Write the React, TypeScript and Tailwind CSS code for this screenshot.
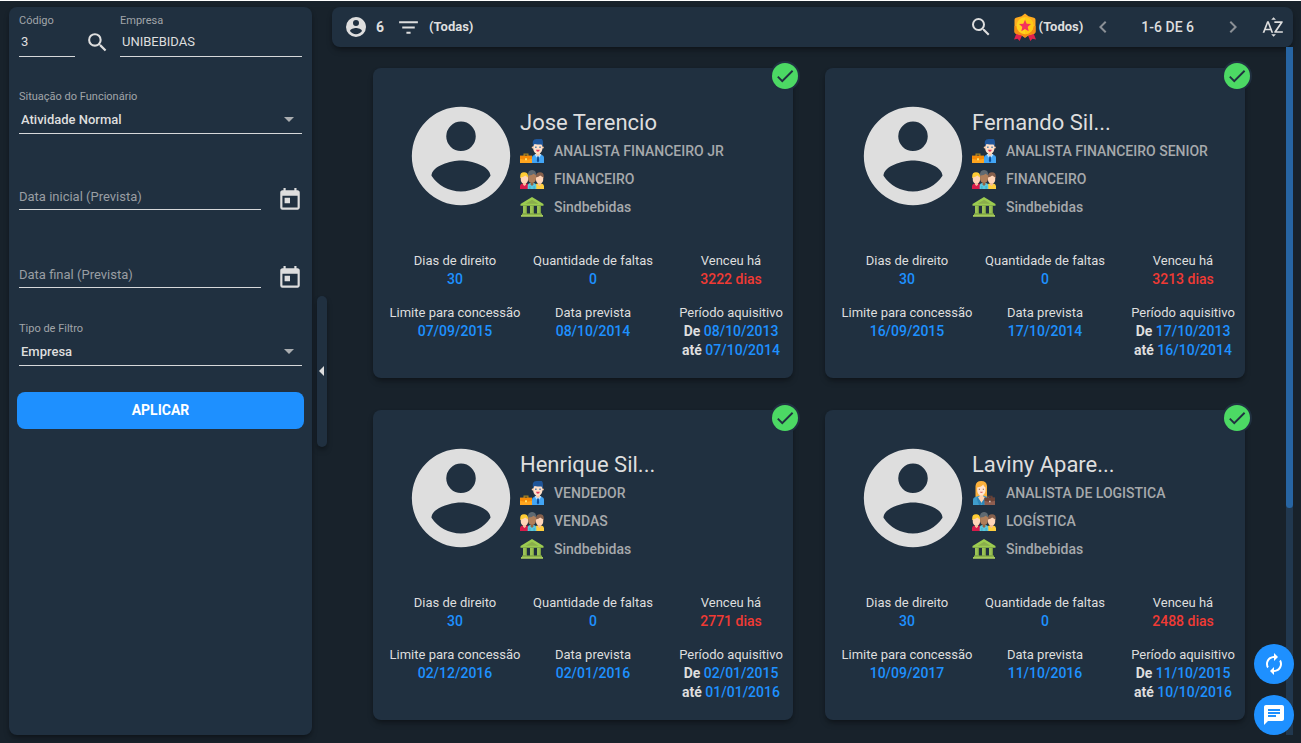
import { useState } from "react";
import {
  MdArrowDropDown,
  MdArrowLeft,
  MdAutorenew,
  MdChat,
  MdCheck,
  MdChevronLeft,
  MdChevronRight,
  MdFilterList,
  MdSearch,
  MdSortByAlpha,
  MdToday,
} from "react-icons/md";

interface Employee {
  name: string;
  role: string;
  female?: boolean;
  department: string;
  union: string;
  days: number;
  absences: number;
  overdue: number;
  limit: string;
  expected: string;
  from: string;
  to: string;
}

const employees: Employee[] = [
  {
    name: "Jose Terencio",
    role: "ANALISTA FINANCEIRO JR",
    department: "FINANCEIRO",
    union: "Sindbebidas",
    days: 30,
    absences: 0,
    overdue: 3222,
    limit: "07/09/2015",
    expected: "08/10/2014",
    from: "08/10/2013",
    to: "07/10/2014",
  },
  {
    name: "Fernando Sil...",
    role: "ANALISTA FINANCEIRO SENIOR",
    department: "FINANCEIRO",
    union: "Sindbebidas",
    days: 30,
    absences: 0,
    overdue: 3213,
    limit: "16/09/2015",
    expected: "17/10/2014",
    from: "17/10/2013",
    to: "16/10/2014",
  },
  {
    name: "Henrique Sil...",
    role: "VENDEDOR",
    department: "VENDAS",
    union: "Sindbebidas",
    days: 30,
    absences: 0,
    overdue: 2771,
    limit: "02/12/2016",
    expected: "02/01/2016",
    from: "02/01/2015",
    to: "01/01/2016",
  },
  {
    name: "Laviny Apare...",
    role: "ANALISTA DE LOGISTICA",
    female: true,
    department: "LOGÍSTICA",
    union: "Sindbebidas",
    days: 30,
    absences: 0,
    overdue: 2488,
    limit: "10/09/2017",
    expected: "11/10/2016",
    from: "11/10/2015",
    to: "10/10/2016",
  },
];

const AccountIcon = ({ size }: { size: number }) => (
  <svg viewBox="0 0 24 24" width={size} height={size} fill="currentColor" className="shrink-0">
    <path d="M12 19.200c-2.500 0-4.710-1.280-6-3.200.03-2 4-3.100 6-3.100s5.970 1.100 6 3.100c-1.290 1.920-3.500 3.200-6 3.200M12 5a3 3 0 013 3 3 3 0 01-3 3 3 3 0 01-3-3 3 3 0 013-3m0-3A10 10 0 002 12a10 10 0 0010 10 10 10 0 0010-10c0-5.530-4.500-10-10-10z" />
  </svg>
);

const BusinessManIcon = () => (
  <svg viewBox="0 0 24 24" className="size-6 shrink-0">
    <path d="M12 24v-5.500q0-2 2-2.600l2.600-.9h2.800l2.600.9q2 .6 2 2.600V24z" fill="#42a5f5" />
    <path d="M16 13.500h4v2.300L18 18l-2-2.200z" fill="#ffc9a3" />
    <path d="M14.600 15.400l1.200-.6L18 17.300l2.200-2.500 1.200.6-1.900 3-1.500-1-1.500 1z" fill="#bbdefb" />
    <path d="M17.300 17.400h1.400l.5 4.600-1.200 1.400-1.200-1.400z" fill="#0d4a94" />
    <circle cx="12.800" cy="8.500" r="1.100" fill="#ffc9a3" />
    <circle cx="22.800" cy="8.500" r="1" fill="#ffc9a3" />
    <path d="M13.200 4h9.200v6q-.7 4.500-4.600 4.800-3.900-.3-4.600-4.800z" fill="#ffe0c9" />
    <path d="M13.200 7.500Q11.200.200 16.500 0h5.200q2 1.500.9 7.500L21.500 5.500h-4L14.500 5z" fill="#1f5599" />
    <path d="M15.100 7.600h1.500v1.300h-1.500zm4.200 0h1.500v1.300h-1.500z" fill="#4f7fae" />
    <path d="M16 10.800h3.800q-.4 2-1.900 2t-1.900-2z" fill="#e5395a" />
    <path d="M3.500 17v-2.500h5V17h-1.200v-1.300H4.700V17z" fill="#a8841c" />
    <path d="M0 16.800h12V24H0z" fill="#ffa51f" />
    <path d="M0 16.800h12v3L6 21l-6-1.200z" fill="#f58a07" />
    <path d="M5 19.300h2v2H5z" fill="#ffe066" />
  </svg>
);

const BusinessWomanIcon = () => (
  <svg viewBox="0 0 24 24" className="size-6 shrink-0">
    <path d="M3.500 16V5Q4 0 9.200 0 14.500 0 15 5v11z" fill="#fbb03b" />
    <path d="M1 24v-5q0-2.500 3-3.200l4-1.300h3l4 1.300q3 .7 3 3.200v5z" fill="#3f9dcc" />
    <path d="M7.500 12h3.700v3.500l1.800 1L9.500 22 6 16.500l1.500-1z" fill="#ffcfad" />
    <path d="M5.500 16l4 6-1 2H7l-2.500-7zm8 0l-4 6 1 2H12l2.500-7z" fill="#2f86b8" />
    <path d="M5.200 6.500q4.500-.6 6-3 .6 2.200 2.300 3v3.500q-.6 4-4.200 4.500-3.600-.5-4.100-4.500z" fill="#ffe3cf" />
    <path d="M6.800 7.700h1.100v1.100H6.800zm4 0h1.100v1.100h-1.100z" fill="#8a5a44" />
    <path d="M7.900 10.800h3q-.3 1.300-1.500 1.300t-1.500-1.300z" fill="#e06a66" />
    <path d="M15 17v-2.300h5.500V17h-1.200v-1.200h-3.100V17z" fill="#6d4035" />
    <path d="M12.500 16.700H23V24H12.500z" fill="#8f5e50" />
    <path d="M12.500 16.700H23v3l-5.200 1.200-5.300-1.200z" fill="#6a4236" />
    <path d="M17 19.700h1.600v1.600H17z" fill="#d7ccc8" />
  </svg>
);

const TeamIcon = () => (
  <svg viewBox="0 0 24 24" className="size-6 shrink-0">
    <path d="M0 22v-3q.3-2.300 2.700-2.500H7L9 18v4z" fill="#d81b4a" />
    <path d="M24 22v-3q-.3-2.300-2.700-2.500H17L15 18v4z" fill="#ffcf3f" />
    <path d="M.2 11V9.500Q0 5.300 4 5.200t4.200 4.300V13z" fill="#ffcc33" />
    <path d="M.8 10.500q3-.3 4.500-2L8 10.500v2.800q-.6 3.400-3.600 3.400T.8 13.300z" fill="#ffd5b8" />
    <path d="M3 16h3v1.700L4.500 19 3 17.700z" fill="#f5bf9c" />
    <path d="M15.800 13V9.500q.2-4.200 4.200-4.300 3.900.1 3.800 4.300V11z" fill="#86604c" />
    <path d="M16 10.500q2.700-.3 4.200-2l3 2v2.800q-.6 3.400-3.600 3.400T16 13.300z" fill="#ffd5b8" />
    <path d="M18 16h3v1.700L19.500 19 18 17.700z" fill="#f5bf9c" />
    <path d="M7.700 22v-3.500q.2-2.300 2.500-2.500h3.600q2.300.2 2.500 2.500V22z" fill="#5cc8df" />
    <path d="M9.500 19h.8v3h-.8zm4.200 0h.8v3h-.8z" fill="#35a9c2" />
    <path d="M7.900 9Q7.500 3.200 12 3t4.200 6z" fill="#5f6a72" />
    <path d="M8.100 8.500q3.800.2 5.600-1.700l2.300 1.700v3.600q-.6 3.800-4 4.200-3.400-.4-3.900-4.200z" fill="#b07f5a" />
    <path d="M10.600 15.500h2.800v2L12 19l-1.400-1.500z" fill="#946541" />
  </svg>
);

const UnionIcon = () => (
  <svg viewBox="0 0 24 24" className="size-6 shrink-0">
    <path d="M12 2l11.500 7v1.700H.5V9z" fill="#9ccc50" />
    <path d="M12 4.700l6.500 4H5.500z" fill="#8aae4c" />
    <path d="M3 10.700h4v8H3zm7 0h4v8h-4zm7 0h4v8h-4z" fill="#9cc455" />
    <path d="M5.800 10.700H7v8H5.800zm7 0H14v8h-1.200zm7 0H21v8h-1.200z" fill="#7a9f43" />
    <path d="M2 18.500h20V20H2z" fill="#8bb347" />
    <path d="M1 20h22v1.800H1z" fill="#a5c95c" />
  </svg>
);

const MedalIcon = () => (
  <svg viewBox="0 0 24 28" className="h-7 w-6 shrink-0">
    <path d="M4 19l5 3.500L6.700 28l-2.200-2.300L1 26.500z" fill="#e0234e" />
    <path d="M20 19l-5 3.500 2.300 5.500 2.200-2.300 3.500.8z" fill="#e0234e" />
    <path d="M12 .500l3.500 2.700 5.500 1.500q1.500.5 1.500 2v12q0 1.500-1.500 2l-5.500 1.500L12 24.800l-3.500-2.600L3 20.700q-1.500-.5-1.500-2v-12q0-1.500 1.500-2l5.500-1.500z" fill="#ffab1f" />
    <path d="M1.500 13h21v5.700q0 1.500-1.500 2l-5.500 1.500L12 24.800l-3.500-2.600L3 20.700q-1.500-.5-1.500-2z" fill="#f58d14" />
    <circle cx="12" cy="12.800" r="8.500" fill="#ffd21f" />
    <path d="M12 4.300a8.500 8.500 0 010 17z" fill="#ffc814" />
    <path d="M12 6.700l1.700 4 4.300.4-3.300 2.800 1 4.300-3.700-2.300-3.700 2.300 1-4.300L6 11.100l4.300-.4z" fill="#f5325b" />
  </svg>
);

const SelectField = ({ id, label, options }: { id: string; label: string; options: string[] }) => (
  <div>
    <label htmlFor={id} className="block text-[11px] leading-4 text-[#a0a5a9]">
      {label}
    </label>
    <div className="grid items-center">
      <select
        id={id}
        className="col-start-1 row-start-1 h-[29px] w-full appearance-none border-b border-[#d6d8da] bg-transparent px-0.5 pt-0.5 text-[13px] font-medium outline-none"
      >
        {options.map((option) => (
          <option key={option}>{option}</option>
        ))}
      </select>
      <MdArrowDropDown size={24} className="pointer-events-none col-start-1 row-start-1 mb-0.5 mr-px justify-self-end text-[#aaadb0]" />
    </div>
  </div>
);

const DateField = ({ label }: { label: string }) => (
  <div className="flex h-[26px] items-end justify-between gap-4">
    <input
      type="text"
      aria-label={label}
      placeholder={label}
      className="h-[26px] min-w-0 flex-1 border-b border-[#d6d8da] bg-transparent text-[13px] outline-none placeholder:text-[#999ea3]"
    />
    <button aria-label={`Abrir calendário: ${label}`} className="-mb-[3px] -mr-px cursor-pointer">
      <MdToday size={26} />
    </button>
  </div>
);

const Sidebar = () => (
  <aside className="w-[303px] shrink-0 rounded-lg bg-[#203040] px-2.5 pt-1.5 shadow-md shadow-black/30">
    <div className="flex items-end">
      <div className="w-14">
        <label htmlFor="codigo" className="block text-[11px] leading-4 text-[#a0a5a9]">
          Código
        </label>
        <input
          id="codigo"
          defaultValue="3"
          className="h-7 w-full border-b border-[#d6d8da] bg-transparent px-0.5 pb-0.5 text-[13px] outline-none"
        />
      </div>
      <button aria-label="Buscar empresa" className="mx-2.5 mb-0.5 cursor-pointer">
        <MdSearch size={25} />
      </button>
      <div className="min-w-0 flex-1">
        <label htmlFor="empresa" className="block text-[11px] leading-4 text-[#a0a5a9]">
          Empresa
        </label>
        <input
          id="empresa"
          defaultValue="UNIBEBIDAS"
          className="h-7 w-full border-b border-[#d6d8da] bg-transparent px-0.5 pb-0.5 text-[13px] outline-none"
        />
      </div>
    </div>

    <div className="mt-8">
      <SelectField id="situacao" label="Situação do Funcionário" options={["Atividade Normal"]} />
    </div>
    <div className="mt-[50px] flex flex-col gap-[52px]">
      <DateField label="Data inicial (Prevista)" />
      <DateField label="Data final (Prevista)" />
    </div>
    <div className="mt-[33px]">
      <SelectField id="filtro" label="Tipo de Filtro" options={["Empresa"]} />
    </div>

    <div className="-mx-0.5 mt-[26px]">
      <button className="h-[37px] w-full cursor-pointer rounded-lg bg-[#1e90ff] pb-0.5 text-sm font-bold text-white">
        APLICAR
      </button>
    </div>
  </aside>
);

const Toolbar = () => (
  <header className="flex h-10 items-center justify-between rounded-lg bg-[#203040] pl-3 pr-2 shadow-md shadow-black/30">
    <div className="flex items-center">
      <AccountIcon size={24} />
      <span className="ml-2 text-sm font-bold">6</span>
      <button className="ml-3 flex cursor-pointer items-center gap-2 text-[13px] font-bold">
        <MdFilterList size={25} />
        (Todas)
      </button>
    </div>
    <div className="flex items-center">
      <button aria-label="Pesquisar" className="cursor-pointer">
        <MdSearch size={24} />
      </button>
      <button className="ml-5 flex cursor-pointer items-center gap-0.5 text-[13px] font-bold">
        <MedalIcon />
        (Todos)
      </button>
      <button aria-label="Página anterior" className="ml-2 cursor-pointer text-[#8b9096]">
        <MdChevronLeft size={24} />
      </button>
      <span className="ml-[26px] mr-[27px] text-sm font-medium">1-6 DE 6</span>
      <button aria-label="Próxima página" className="cursor-pointer text-[#8b9096]">
        <MdChevronRight size={24} />
      </button>
      <button aria-label="Ordenar" className="ml-4 cursor-pointer">
        <MdSortByAlpha size={24} />
      </button>
    </div>
  </header>
);

const EmployeeCard = ({ employee }: { employee: Employee }) => (
  <article className="relative rounded-lg bg-[#203040] pb-[18px] shadow-md shadow-black/30">
    <div className="absolute -right-[7px] -top-[7px] rounded-full bg-[#203040] p-0.5">
      <div className="flex size-[26px] items-center justify-center rounded-full bg-[#4cd964] text-[#203040]">
        <MdCheck size={22} />
      </div>
    </div>

    <div className="flex items-start pl-[29px] pt-[29px]">
      <AccountIcon size={118} />
      <div className="min-w-0 pt-[11px] text-sm font-medium text-[#a6a9ac]">
        <h2 className="truncate text-[22px] font-normal leading-[29px] text-[#dedede]">{employee.name}</h2>
        <p className="flex h-7 items-center gap-2.5">
          {employee.female ? <BusinessWomanIcon /> : <BusinessManIcon />}
          {employee.role}
        </p>
        <p className="flex h-7 items-center gap-2.5">
          <TeamIcon />
          {employee.department}
        </p>
        <p className="flex h-7 items-center gap-2.5">
          <UnionIcon />
          {employee.union}
        </p>
      </div>
    </div>

    <dl className="-mr-[7px] mt-[30px] grid grid-cols-3 gap-y-3.5 pl-[13px] text-center text-sm leading-[19px]">
      <div>
        <dt className="text-[13px] leading-[19px]">Dias de direito</dt>
        <dd className="font-medium text-[#1e90ff]">{employee.days}</dd>
      </div>
      <div>
        <dt className="text-[13px] leading-[19px]">Quantidade de faltas</dt>
        <dd className="font-medium text-[#1e90ff]">{employee.absences}</dd>
      </div>
      <div>
        <dt className="text-[13px] leading-[19px]">Venceu há</dt>
        <dd className="font-medium text-[#f03a34]">{employee.overdue} dias</dd>
      </div>
      <div>
        <dt className="text-[13px] leading-[19px]">Limite para concessão</dt>
        <dd className="font-medium text-[#1e90ff]">{employee.limit}</dd>
      </div>
      <div>
        <dt className="text-[13px] leading-[19px]">Data prevista</dt>
        <dd className="font-medium text-[#1e90ff]">{employee.expected}</dd>
      </div>
      <div>
        <dt className="text-[13px] leading-[19px]">Período aquisitivo</dt>
        <dd className="font-medium text-[#1e90ff]">
          <b className="text-[#dedede]">De</b> {employee.from}
        </dd>
        <dd className="font-medium text-[#1e90ff]">
          <b className="text-[#dedede]">até</b> {employee.to}
        </dd>
      </div>
    </dl>
  </article>
);

const App = () => {
  const [open, setOpen] = useState(true);

  return (
    <div className="flex min-h-screen border-t border-white bg-[#18222b] pb-2 pl-[9px] pr-2 pt-1.5 font-[Roboto,sans-serif] text-[#dedede]">
      {open && <Sidebar />}
      <button
        aria-label="Recolher filtros"
        onClick={() => setOpen(!open)}
        className="mx-[5px] flex h-[151px] w-2.5 shrink-0 cursor-pointer items-center justify-center self-center rounded-md bg-[#203040] shadow-md shadow-black/30"
      >
        <MdArrowLeft size={24} className="shrink-0" />
      </button>

      <main className="flex min-w-0 flex-1 flex-col">
        <Toolbar />
        <div className="flex flex-1">
          <section className="grid flex-1 grid-cols-[repeat(auto-fit,minmax(400px,1fr))] content-start gap-8 px-[41px] pt-[21px]">
            {employees.map((employee) => (
              <EmployeeCard key={employee.name} employee={employee} />
            ))}
          </section>
          {/* Scroll track */}
          <div className="w-[7px] shrink-0 bg-[#21384f]">
            <div className="h-[67%] rounded-b-sm bg-[#2765a3]" />
          </div>
        </div>
      </main>

      <div className="fixed bottom-2 right-[7px] flex flex-col gap-[11px] text-white">
        <button aria-label="Atualizar" className="flex size-10 cursor-pointer items-center justify-center rounded-full bg-[#1e90ff]">
          <MdAutorenew size={24} />
        </button>
        <button aria-label="Mensagens" className="flex size-10 cursor-pointer items-center justify-center rounded-full bg-[#1e90ff]">
          <MdChat size={24} />
        </button>
      </div>
    </div>
  );
};

export default App;
